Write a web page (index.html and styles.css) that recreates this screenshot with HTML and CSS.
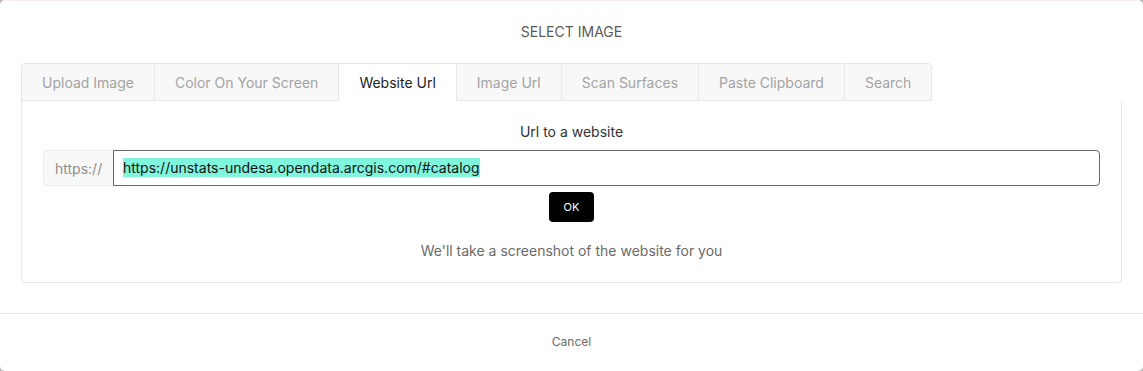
FILE: index.html
```html
<!DOCTYPE html>
<html lang="en">
<head>
    <meta charset="UTF-8">
    <meta name="viewport" content="width=device-width, initial-scale=1.0">
    <title>Select Image</title>
    <link rel="stylesheet" href="styles.css">
</head>
<body>
    <div class="modal">
        <div class="modal-body">
            <h2 class="modal-title">SELECT IMAGE</h2>
            <div class="tabs">
                <div class="tab first">Upload Image</div>
                <div class="tab">Color On Your Screen</div>
                <div class="tab active">Website Url</div>
                <div class="tab">Image Url</div>
                <div class="tab">Scan Surfaces</div>
                <div class="tab">Paste Clipboard</div>
                <div class="tab last">Search</div>
            </div>
            <div class="panel">
                <div class="panel-label">Url to a website</div>
                <div class="input-group">
                    <span class="prefix">https://</span>
                    <div class="url-input"><span class="selected">https://unstats-undesa.opendata.arcgis.com/#catalog</span></div>
                </div>
                <div class="menu">
                    <button type="button" class="ok-btn">OK</button>
                </div>
                <div class="hint">We'll take a screenshot of the website for you</div>
            </div>
        </div>
        <div class="modal-footer">
            <button type="button" class="cancel-btn">Cancel</button>
        </div>
    </div>
</body>
</html>
```

FILE: styles.css
```css
body {
    font-family: Inter, "Noto Sans", Arial, sans-serif;
    background-color: #b8b8b8;
    margin: 0;
    padding: 0;
}
.modal {
    background-color: #fff;
    height: 371px;
    border-radius: 5px;
    display: flex;
    flex-direction: column;
    box-sizing: border-box;
    border-top: 1px solid #fbeeee;
}
.modal-body {
    padding: 21px 21px 0 21px;
    flex: 1;
}
.modal-title {
    margin: 0 0 21px 0;
    font-size: 14px;
    font-weight: 400;
    line-height: 20px;
    text-align: center;
    color: #5a5a5a;
}
.tabs {
    display: flex;
}
.tab {
    height: 36px;
    line-height: 37px;
    padding: 0 20px;
    font-size: 14px;
    color: #a3a3a3;
    background-color: #f8f8f8;
    border: 1px solid #e8e8e8;
    border-right: none;
    border-bottom: 1px solid #e8e8e8;
}
.tab.first {
    border-top-left-radius: 4px;
}
.tab.last {
    border-right: 1px solid #e8e8e8;
    border-top-right-radius: 4px;
}
.tab.active {
    background-color: #fff;
    color: #222;
    border-bottom-color: #fff;
}
.panel {
    border: 1px solid #e8e8e8;
    border-top: none;
    border-radius: 0 0 4px 4px;
    padding: 21px;
    text-align: center;
}
.panel-label {
    font-size: 14px;
    line-height: 20px;
    color: #333;
    margin-bottom: 8px;
}
.input-group {
    display: flex;
    height: 36px;
    text-align: left;
}
.prefix {
    width: 70px;
    box-sizing: border-box;
    padding-left: 11px;
    font-size: 14px;
    line-height: 36px;
    color: #8e8e8e;
    background-color: #f8f8f8;
    border: 1px solid #ededed;
    border-right: none;
    border-radius: 4px 0 0 4px;
}
.url-input {
    flex: 1;
    border: 1px solid #666;
    border-radius: 0 4px 4px 0;
    padding-left: 9px;
    font-size: 14px;
    line-height: 34px;
    color: #111;
}
.url-input .selected {
    background-color: #7ef5dc;
    padding: 1px 0;
}
.menu {
    margin-top: 6px;
}
.ok-btn {
    background-color: #000;
    color: #fff;
    border: none;
    border-radius: 4px;
    height: 30px;
    width: 45px;
    font-family: inherit;
    font-size: 11px;
    cursor: pointer;
}
.hint {
    margin-top: 19px;
    font-size: 14px;
    line-height: 20px;
    color: #6a6a6a;
}
.modal-footer {
    border-top: 1px solid #e8e8e8;
    height: 55px;
    padding-bottom: 2px;
    display: flex;
    justify-content: center;
    align-items: center;
}
.cancel-btn {
    background: none;
    border: none;
    font-family: inherit;
    font-size: 12px;
    color: #6a6a6a;
    cursor: pointer;
}
```
